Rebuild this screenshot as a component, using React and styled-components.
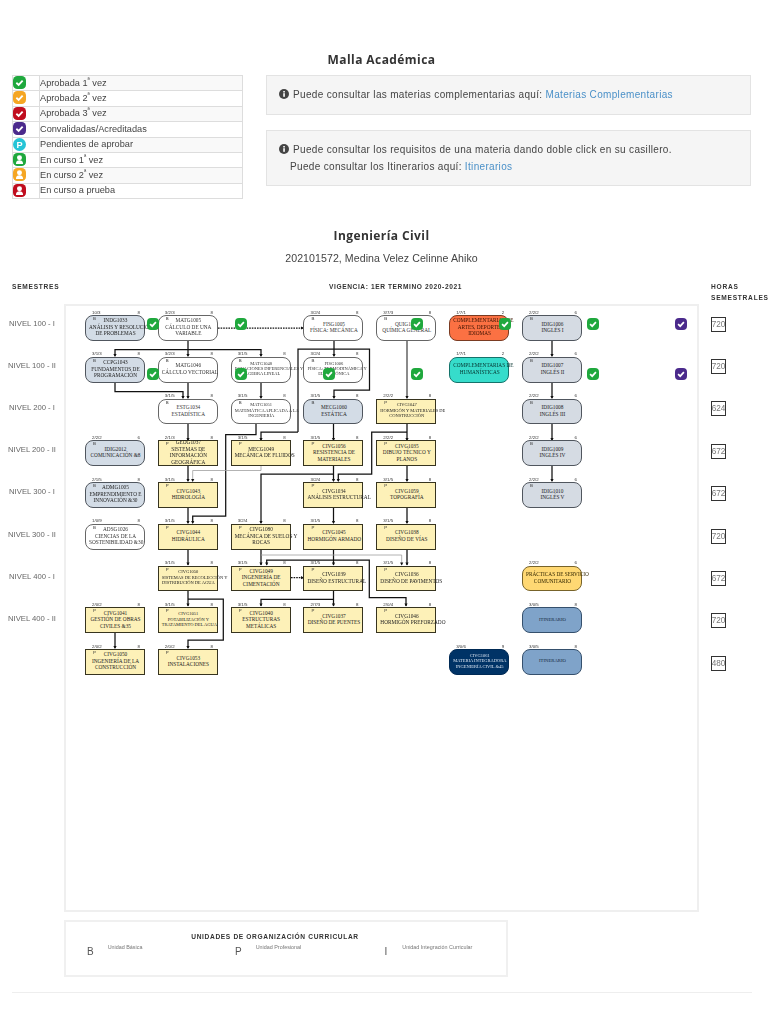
import React from 'react';
import styled, { createGlobalStyle } from 'styled-components';

const GlobalStyle = createGlobalStyle`
  html, body { margin: 0; padding: 0; background: #fff; }
  body { font-family: "Liberation Sans", Arial, sans-serif; color: #333; }
`;

const Page = styled.div`
  width: 768px;
  height: 1024px;
  overflow: hidden;
  padding-top: 52px;
  box-sizing: border-box;
  filter: blur(0.5px);
`;

const Title = styled.h2`
  margin: ${p => p.$top || 0}px 0 0 12px;
  width: 739px;
  height: 16px;
  font: bold 12px/16px "Open Sans", sans-serif;
  letter-spacing: 0.42px;
  text-align: center;
  color: #333;
`;

const TopRow = styled.div`
  display: flex;
  gap: 23px;
  margin: 7px 17px 0 12px;
`;

const LegendTable = styled.table`
  width: 231px;
  flex: none;
  border-collapse: collapse;
  table-layout: fixed;
  font-size: 9.2px;
  color: #444;
  tr { height: 15.4px; }
  tr:nth-child(odd) td:last-child { background: #f9f9f9; }
  td { border: 1px solid #ddd; padding: 0 0 1px 0; line-height: 12px; }
  td:first-child { width: 26px; padding: 0; vertical-align: top; }
  sup { font-size: 6px; line-height: 0; }
  svg { display: block; }
`;

const InfoColumn = styled.div`
  flex: 1;
  display: flex;
  flex-direction: column;
  gap: 15px;
`;

const Well = styled.div`
  height: ${p => p.$height}px;
  box-sizing: border-box;
  padding: 11px 12px 10px;
  background: #f5f5f5;
  border: 1px solid #e3e3e3;
  font-size: 10px;
  line-height: 16.5px;
  letter-spacing: 0.33px;
  color: #444;
  svg { vertical-align: -1px; margin: 0 4px 0 0; }
  a { color: #4a90c8; text-decoration: none; }
`;

const WellLine = styled.div`
  padding-left: ${p => (p.$indent ? 11 : 0)}px;
`;

const Student = styled.div`
  margin: 6px 0 0 12px;
  width: 739px;
  text-align: center;
  font-size: 10.6px;
  line-height: 16px;
  letter-spacing: 0.06px;
  color: #444;
`;

const MainGrid = styled.div`
  display: grid;
  grid-template-columns: 64px 635px 69px;
  margin-top: 15px;
`;

const HeadLabel = styled.div`
  height: 23px;
  padding-left: ${p => p.$pad || 0}px;
  text-align: ${p => p.$align || 'left'};
  font-size: 6.6px;
  font-weight: bold;
  line-height: 11px;
  letter-spacing: ${p => p.$track || 0.75}px;
  color: #333;
  white-space: nowrap;
`;

const Side = styled.div`
  display: grid;
  grid-auto-rows: ${p => p.$cell}px;
  row-gap: ${p => p.$gap}px;
  align-content: start;
  padding-top: ${p => p.$top}px;
`;

const Level = styled.div`
  display: flex;
  align-items: center;
  justify-content: center;
  width: 64px;
  font-size: 7.7px;
  color: #666;
`;

const Hours = styled.div`
  width: 13px;
  height: 13px;
  margin-left: 12px;
  border: 1px solid #333;
  display: flex;
  align-items: center;
  justify-content: center;
  font-size: 8.2px;
  color: #777;
`;

const Canvas = styled.div`
  position: relative;
  height: 608px;
  box-sizing: border-box;
  border: 2px solid #efefef;
  padding: 9px 0 0 19px;
  display: grid;
  grid-template-columns: repeat(7, 60px);
  column-gap: 12.83px;
  grid-auto-rows: 25.75px;
  row-gap: 16px;
  align-content: start;
`;

const Wires = styled.svg`
  position: absolute;
  left: 0;
  top: 0;
  pointer-events: none;
`;

const Wire = styled.path`
  fill: none;
  stroke: ${p => (p.$thin ? '#a0a0a0' : p.$soft ? '#444' : '#111')};
  stroke-width: ${p => (p.$thin ? 0.8 : 1.25)};
  stroke-dasharray: ${p => (p.$dash ? '1.6 1' : 'none')};
`;

const palette = {
  base: { bg: '#d3dce6', line: '#50565e', radius: 8, ink: '#222' },
  white: { bg: '#fff', line: '#666', radius: 8, ink: '#333' },
  pro: { bg: '#fdf1b8', line: '#37341f', radius: 0, ink: '#222' },
  arts: { bg: '#fb7143', line: '#7a3b22', radius: 8, ink: '#3a1200' },
  human: { bg: '#36dccb', line: '#14736b', radius: 8, ink: '#06332f' },
  service: { bg: '#ffd873', line: '#77632a', radius: 8, ink: '#332700' },
  route: { bg: '#7fa3c9', line: '#35506d', radius: 8, ink: '#13253a' },
  navy: { bg: '#003366', line: '#002a55', radius: 8, ink: '#dbe6f2' },
  english: { bg: '#d5dbe3', line: '#50565e', radius: 8, ink: '#222' },
};

const Node = styled.div`
  grid-column: ${p => p.$col};
  grid-row: ${p => p.$row};
  position: relative;
  box-sizing: border-box;
  display: flex;
  flex-direction: column;
  justify-content: center;
  padding: 0 2px 2px 3px;
  background: ${p => palette[p.$kind].bg};
  border: 1.5px solid ${p => palette[p.$kind].line};
  border-radius: ${p => palette[p.$kind].radius}px;
  color: ${p => palette[p.$kind].ink};
  font-family: "Liberation Serif", "Times New Roman", serif;
  font-size: ${p => p.$size}px;
  line-height: ${p => (p.$size < 5 ? 5.4 : 6.5)}px;
  text-align: center;
  white-space: nowrap;
`;

const Meta = styled.span`
  position: absolute;
  top: -6.5px;
  ${p => (p.$right ? 'right: 4px;' : 'left: 6px;')}
  font: 4.4px/5px "Liberation Sans", sans-serif;
  color: #333;
`;

const Unit = styled.span`
  position: absolute;
  top: 0;
  left: 7px;
  font: 4.4px/5px "Liberation Sans", sans-serif;
  color: #333;
`;

const Badge = styled.svg`
  position: absolute;
  width: 12px;
  height: 12px;
  left: ${p => p.$x - 72}px;
  top: ${p => p.$y - 312}px;
`;

const UnitsBox = styled.div`
  margin: 8px 0 0 64px;
  width: 444px;
  height: 57px;
  box-sizing: border-box;
  border: 2px solid #f0f0f0;
  padding-top: 10px;
`;

const UnitsTitle = styled.div`
  padding-right: 22px;
  text-align: center;
  font-size: 6.6px;
  font-weight: bold;
  line-height: 10px;
  letter-spacing: 0.65px;
  color: #333;
`;

const UnitsRow = styled.div`
  display: grid;
  grid-template-columns: 148px 149.5px 140px;
  padding-left: 21px;
`;

const UnitItem = styled.div`
  display: flex;
  gap: ${p => p.$gap}px;
  color: #555;
`;

const UnitLetter = styled.span`
  font-size: 10px;
  line-height: 14px;
  margin-top: 3px;
`;

const UnitName = styled.span`
  font-size: 5.4px;
  line-height: 10px;
  color: #777;
`;

const Rule = styled.hr`
  margin: 15px 16px 0 12px;
  border: 0;
  border-top: 1px solid #eee;
`;

const CHECK = { green: '#1fa83d', amber: '#f5a623', red: '#c00d1e', purple: '#4b2a8c' };

const CheckIcon = ({ color, size = 13 }) => (
  <svg width={size} height={size} viewBox="0 0 12 12">
    <rect x="0" y="0" width="12" height="12" rx="4" fill={color} />
    <path d="M3.1 6.2 5.2 8.2 8.9 4.2" fill="none" stroke="#fff" strokeWidth="1.7" />
  </svg>
);

const UserIcon = ({ color }) => (
  <svg width="13" height="13" viewBox="0 0 12 12">
    <rect width="12" height="12" rx="4" fill={color} />
    <circle cx="6" cy="4.4" r="2.3" fill="#fff" />
    <path d="M2.7 10.2c0-2.4 1.4-3.4 3.3-3.4s3.3 1 3.3 3.4z" fill="#fff" />
  </svg>
);

const PendingIcon = () => (
  <svg width="13" height="13" viewBox="0 0 12 12">
    <circle cx="6" cy="6" r="6" fill="#25c4d6" />
    <text x="6" y="9" textAnchor="middle" fontSize="8.5" fontWeight="bold" fill="#fff" fontFamily="Liberation Sans">P</text>
  </svg>
);

const InfoIcon = () => (
  <svg width="10" height="10" viewBox="0 0 10 10">
    <circle cx="5" cy="5" r="5" fill="#444" />
    <rect x="4.2" y="4.2" width="1.7" height="3.6" fill="#f5f5f5" />
    <rect x="4.2" y="2" width="1.7" height="1.5" fill="#f5f5f5" />
  </svg>
);

const legend = [
  [<CheckIcon color={CHECK.green} />, <>Aprobada 1<sup>ª</sup> vez</>],
  [<CheckIcon color={CHECK.amber} />, <>Aprobada 2<sup>ª</sup> vez</>],
  [<CheckIcon color={CHECK.red} />, <>Aprobada 3<sup>ª</sup> vez</>],
  [<CheckIcon color={CHECK.purple} />, 'Convalidadas/Acreditadas'],
  [<PendingIcon />, 'Pendientes de aprobar'],
  [<UserIcon color={CHECK.green} />, <>En curso 1<sup>ª</sup> vez</>],
  [<UserIcon color={CHECK.amber} />, <>En curso 2<sup>ª</sup> vez</>],
  [<UserIcon color={CHECK.red} />, 'En curso a prueba'],
];

const levels = ['NIVEL 100 - I', 'NIVEL 100 - II', 'NIVEL 200 - I', 'NIVEL 200 - II', 'NIVEL 300 - I', 'NIVEL 300 - II', 'NIVEL 400 - I', 'NIVEL 400 - II'];
const hours = [720, 720, 624, 672, 672, 720, 672, 720, 480];

// col, row, kind, hours label, credits, unit letter, lines, font size
const SMALL = 4.5;
const nodes = [
  [1, 1, 'base', '10/3', '8', 'B', ['INDG1033', 'ANÁLISIS Y RESOLUCIÓN', 'DE PROBLEMAS']],
  [2, 1, 'white', '3/2/3', '8', 'B', ['MATG1005', 'CÁLCULO DE UNA', 'VARIABLE']],
  [4, 1, 'white', '3/2/4', '8', 'B', ['FISG1005', 'FÍSICA: MECÁNICA']],
  [5, 1, 'white', '3/7/3', '8', 'B', ['QUIG1005', 'QUÍMICA GENERAL']],
  [6, 1, 'arts', '1/7/1', '2', '', ['COMPLEMENTARIAS DE', 'ARTES, DEPORTE,', 'IDIOMAS']],
  [7, 1, 'english', '2/2/2', '6', 'B', ['IDIG1006', 'INGLÉS I']],
  [1, 2, 'base', '3/1/3', '8', 'B', ['CCPG1043', 'FUNDAMENTOS DE', 'PROGRAMACIÓN']],
  [2, 2, 'white', '3/2/3', '8', 'B', ['MATG1046', 'CÁLCULO VECTORIAL']],
  [3, 2, 'white', '3/1/5', '8', 'B', ['MATG1048', 'ECUACIONES DIFERENCIALES Y', 'ÁLGEBRA LINEAL'], SMALL],
  [4, 2, 'white', '3/2/4', '8', 'B', ['FISG1006', 'FÍSICA: TERMODINÁMICA Y', 'ELECTRÓNICA'], SMALL],
  [6, 2, 'human', '1/7/1', '2', '', ['COMPLEMENTARIAS DE', 'HUMANÍSTICAS']],
  [7, 2, 'english', '2/2/2', '6', 'B', ['IDIG1007', 'INGLÉS II']],
  [2, 3, 'white', '3/1/5', '8', 'B', ['ESTG1034', 'ESTADÍSTICA']],
  [3, 3, 'white', '3/1/5', '8', 'B', ['MATG1051', 'MATEMÁTICA APLICADA A LA', 'INGENIERÍA'], SMALL],
  [4, 3, 'base', '3/1/5', '8', 'B', ['MECG1060', 'ESTÁTICA']],
  [5, 3, 'pro', '2/2/2', '8', 'P', ['CIVG1047', 'HORMIGÓN Y MATERIALES DE', 'CONSTRUCCIÓN'], SMALL],
  [7, 3, 'english', '2/2/2', '6', 'B', ['IDIG1008', 'INGLÉS III']],
  [1, 4, 'base', '2/2/2', '6', 'B', ['IDIG2012', 'COMUNICACIÓN &8']],
  [2, 4, 'pro', '2/1/3', '8', 'P', ['GEOG1037', 'SISTEMAS DE', 'INFORMACIÓN', 'GEOGRÁFICA']],
  [3, 4, 'pro', '3/1/5', '8', 'P', ['MECG1049', 'MECÁNICA DE FLUIDOS']],
  [4, 4, 'pro', '3/1/5', '8', 'P', ['CIVG1056', 'RESISTENCIA DE', 'MATERIALES']],
  [5, 4, 'pro', '2/2/2', '8', 'P', ['CIVG1035', 'DIBUJO TÉCNICO Y', 'PLANOS']],
  [7, 4, 'english', '2/2/2', '6', 'B', ['IDIG1009', 'INGLÉS IV']],
  [1, 5, 'base', '2/1/5', '8', 'B', ['ADMG1005', 'EMPRENDIMIENTO E', 'INNOVACIÓN &30']],
  [2, 5, 'pro', '3/1/5', '8', 'P', ['CIVG1043', 'HIDROLOGÍA']],
  [4, 5, 'pro', '3/2/4', '8', 'P', ['CIVG1034', 'ANÁLISIS ESTRUCTURAL']],
  [5, 5, 'pro', '3/1/5', '8', 'P', ['CIVG1059', 'TOPOGRAFÍA']],
  [7, 5, 'english', '2/2/2', '6', 'B', ['IDIG1010', 'INGLÉS V']],
  [1, 6, 'white', '1/0/9', '8', 'B', ['ADSG1026', 'CIENCIAS DE LA', 'SOSTENIBILIDAD &30']],
  [2, 6, 'pro', '3/1/5', '8', 'P', ['CIVG1044', 'HIDRÁULICA']],
  [3, 6, 'pro', '3/2/4', '8', 'P', ['CIVG1080', 'MECÁNICA DE SUELOS Y', 'ROCAS']],
  [4, 6, 'pro', '3/1/5', '8', 'P', ['CIVG1045', 'HORMIGÓN ARMADO']],
  [5, 6, 'pro', '3/1/5', '8', 'P', ['CIVG1038', 'DISEÑO DE VÍAS']],
  [2, 7, 'pro', '3/1/5', '8', 'P', ['CIVG1050', 'SISTEMAS DE RECOLECCIÓN Y', 'DISTRIBUCIÓN DE AGUA'], SMALL],
  [3, 7, 'pro', '3/1/5', '8', 'P', ['CIVG1049', 'INGENIERÍA DE', 'CIMENTACIÓN']],
  [4, 7, 'pro', '3/1/5', '8', 'P', ['CIVG1039', 'DISEÑO ESTRUCTURAL']],
  [5, 7, 'pro', '3/1/5', '8', 'P', ['CIVG1036', 'DISEÑO DE PAVIMENTOS']],
  [7, 7, 'service', '2/2/2', '6', '', ['PRÁCTICAS DE SERVICIO', 'COMUNITARIO']],
  [1, 8, 'pro', '2/0/2', '8', 'P', ['CIVG1041', 'GESTIÓN DE OBRAS', 'CIVILES &35']],
  [2, 8, 'pro', '3/1/5', '8', 'P', ['CIVG1051', 'POTABILIZACIÓN Y', 'TRATAMIENTO DEL AGUA'], SMALL],
  [3, 8, 'pro', '3/1/5', '8', 'P', ['CIVG1040', 'ESTRUCTURAS', 'METÁLICAS']],
  [4, 8, 'pro', '2/7/3', '8', 'P', ['CIVG1037', 'DISEÑO DE PUENTES']],
  [5, 8, 'pro', '2/0/4', '8', 'P', ['CIVG1046', 'HORMIGÓN PREFORZADO']],
  [7, 8, 'route', '3/0/5', '8', '', ['ITINERARIO'], 4.7],
  [1, 9, 'pro', '2/0/2', '8', 'P', ['CIVG1050', 'INGENIERÍA DE LA', 'CONSTRUCCIÓN']],
  [2, 9, 'pro', '2/0/2', '8', 'P', ['CIVG1053', 'INSTALACIONES']],
  [6, 9, 'navy', '3/0/6', '9', '', ['CIVG1061', 'MATERIA INTEGRADORA', 'INGENIERÍA CIVIL &45'], SMALL],
  [7, 9, 'route', '3/0/5', '8', '', ['ITINERARIO'], 4.7],
];

// page coordinates, the svg viewBox starts at the canvas corner
const wires = [
  { d: 'M218 328H303', dash: true },
  { d: 'M188 341V349.5M115 356V349.5H261V356' },
  { d: 'M115 382V391.5H183V398' },
  { d: 'M188 349V356M188 382V398M261 382V398' },
  { d: 'M334 341V356M298 432V349H369.5V390H334V398' },
  { d: 'M298 432H261V440' },
  { d: 'M256 424V434.5H225.7V516H192.7V523' },
  { d: 'M188 424V440M333.5 424V440' },
  { d: 'M407 341V398', soft: true },
  { d: 'M407 424V440M407 432H371.7V474H338.3V481' },
  { d: 'M333.5 466V481M333.5 474H261V523' },
  { d: 'M188 466V481M407 466V481' },
  { d: 'M261 466V470.5H192.7V481', thin: true },
  { d: 'M188 507V523M333.5 507V523M407 507V523' },
  { d: 'M188 549V565M261 549V565M333.5 549V565M407 549V565' },
  { d: 'M261 555H401.7V565', thin: true },
  { d: 'M266.7 565V560H369.3V597.5H406V606' },
  { d: 'M291 577.7H303', dash: true },
  { d: 'M333.5 590V606M333.5 599.3H261V606' },
  { d: 'M188 590V606M188 599H223.3V640H188V648' },
  { d: 'M115 632V648' },
  { d: 'M552 341V356M552 382V398M552 424V440M552 466V481' },
];

// arrow tips, drawn by hand so the small heads sit on the box edge
const tips = [
  [115, 357], [188, 357], [261, 357], [334, 357], [552, 357],
  [183, 399], [188, 399], [261, 399], [334, 399], [407, 399], [552, 399],
  [188, 441], [261, 441], [333.5, 441], [407, 441], [552, 441],
  [188, 482], [192.7, 482], [333.5, 482], [338.3, 482], [407, 482], [552, 482],
  [188, 524], [192.7, 524], [261, 524], [333.5, 524], [407, 524],
  [188, 565.5], [261, 565.5], [266.7, 565.5], [333.5, 565.5], [401.7, 565.5], [407, 565.5],
  [188, 606.5], [261, 606.5], [333.5, 606.5], [406, 606.5],
  [115, 649], [188, 649],
];

const badges = [
  [153, 324, 'green'], [241, 324, 'green'], [417, 324, 'green'], [505, 324, 'green'], [593, 324, 'green'], [681, 324, 'purple'],
  [153, 374, 'green'], [241, 374, 'green'], [329, 374, 'green'], [417, 374, 'green'], [593, 374, 'green'], [681, 374, 'purple'],
];

export default function App() {
  return (
    <Page>
      <GlobalStyle />
      <Title>Malla Académica</Title>
      <TopRow>
        <LegendTable>
          <tbody>
            {legend.map(([icon, label], i) => (
              <tr key={i}>
                <td>{icon}</td>
                <td>{label}</td>
              </tr>
            ))}
          </tbody>
        </LegendTable>
        <InfoColumn>
          <Well $height={40}>
            <WellLine>
              <InfoIcon />Puede consultar las materias complementarias aquí: <a href="#m">Materias Complementarias</a>
            </WellLine>
          </Well>
          <Well $height={56}>
            <WellLine>
              <InfoIcon />Puede consultar los requisitos de una materia dando doble click en su casillero.
            </WellLine>
            <WellLine $indent>
              Puede consultar los Itinerarios aquí: <a href="#i">Itinerarios</a>
            </WellLine>
          </Well>
        </InfoColumn>
      </TopRow>

      <Title $top={29}>Ingeniería Civil</Title>
      <Student>202101572, Medina Velez Celinne Ahiko</Student>

      <MainGrid>
        <HeadLabel $pad={12}>SEMESTRES</HeadLabel>
        <HeadLabel $align="center" $pad={28} $track={0.6}>VIGENCIA: 1ER TERMINO 2020-2021</HeadLabel>
        <HeadLabel $pad={12}>HORAS<br />SEMESTRALES</HeadLabel>

        <Side $cell={19} $gap={23.2} $top={9.5}>
          {levels.map(l => <Level key={l}>{l}</Level>)}
        </Side>

        <Canvas>
          <Wires width="631" height="604" viewBox="66 306 631 604">
            {wires.map((w, i) => <Wire key={i} d={w.d} $dash={w.dash} $thin={w.thin} $soft={w.soft} />)}
            {tips.map(([x, y]) => (
              <path key={`${x}-${y}`} d={`M${x - 1.6} ${y - 3}H${x + 1.6}L${x} ${y}z`} fill="#111" />
            ))}
            <path d="M304 328l-3-1.6v3.2zM304 577.7l-3-1.6v3.2z" fill="#111" />
          </Wires>
          {nodes.map(([col, row, kind, meta, credits, unit, lines, size = 5.3]) => (
            <Node key={`${col}-${row}`} $col={col} $row={row} $kind={kind} $size={size}>
              <Meta>{meta}</Meta>
              <Meta $right>{credits}</Meta>
              {unit && <Unit>{unit}</Unit>}
              {lines.map(line => <div key={line}>{line}</div>)}
            </Node>
          ))}
          {badges.map(([x, y, tone]) => (
            <Badge key={`${x}-${y}`} $x={x} $y={y} viewBox="0 0 12 12">
              <rect width="12" height="12" rx="4" fill={CHECK[tone]} />
              <path d="M3.1 6.2 5.2 8.2 8.9 4.2" fill="none" stroke="#fff" strokeWidth="1.7" />
            </Badge>
          ))}
        </Canvas>

        <Side $cell={15} $gap={27.4} $top={12.5}>
          {hours.map((h, i) => <Hours key={i}>{h}</Hours>)}
        </Side>
      </MainGrid>

      <UnitsBox>
        <UnitsTitle>UNIDADES DE ORGANIZACIÓN CURRICULAR</UnitsTitle>
        <UnitsRow>
          <UnitItem $gap={14}><UnitLetter>B</UnitLetter><UnitName>Unidad Básica</UnitName></UnitItem>
          <UnitItem $gap={14}><UnitLetter>P</UnitLetter><UnitName>Unidad Profesional</UnitName></UnitItem>
          <UnitItem $gap={15}><UnitLetter>I</UnitLetter><UnitName>Unidad Integración Curricular</UnitName></UnitItem>
        </UnitsRow>
      </UnitsBox>
      <Rule />
    </Page>
  );
}
